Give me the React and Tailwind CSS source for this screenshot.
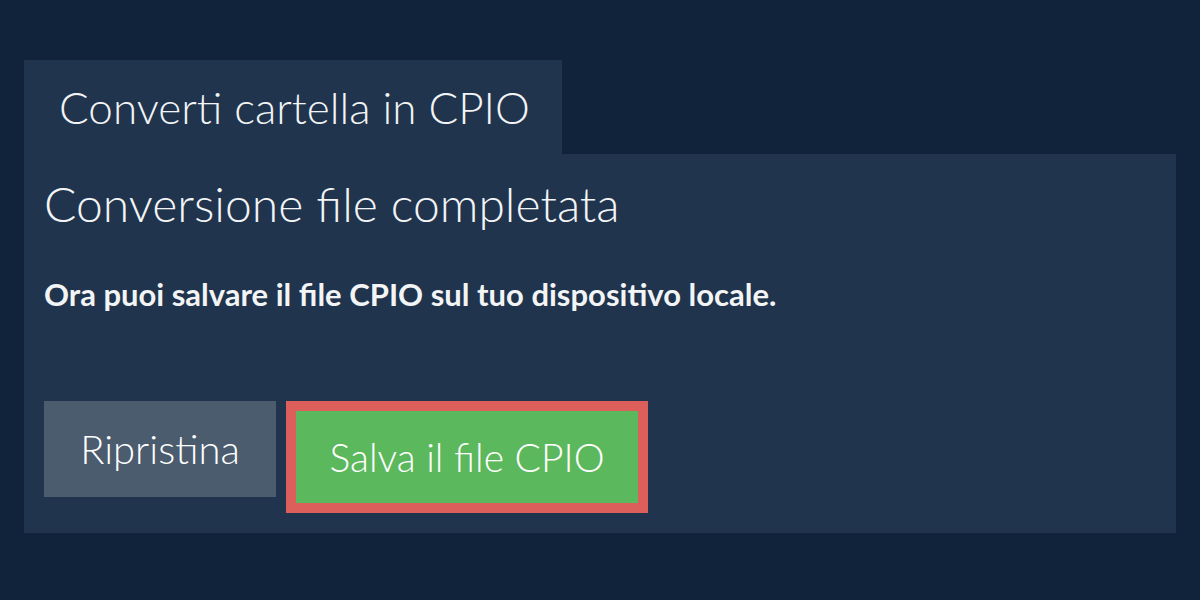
import React from 'react';

const App = () => {
  return (
    <div className="w-[1200px] h-[600px] bg-[#10233a] pt-[60px] px-[24px] font-['Lato',sans-serif] text-[#f3f4f6]">
      {/* Tab */}
      <div className="w-[538px] h-[94px] bg-[#20354d] flex items-center pl-[35px]">
        <h1 className="text-[44px] font-light leading-none">Converti cartella in CPIO</h1>
      </div>

      {/* Panel */}
      <div className="h-[379px] bg-[#20354d] px-[20px] pt-[26px]">
        <h2 className="text-[48px] font-light leading-none">Conversione file completata</h2>
        <p className="mt-[51px] text-[31px] font-bold leading-none">
          Ora puoi salvare il file CPIO sul tuo dispositivo locale.
        </p>

        <div className="mt-[91px] flex items-start gap-[10px]">
          <button className="w-[232px] h-[96px] bg-[#4b5c6e] text-white text-[40px] font-light">
            Ripristina
          </button>
          <button className="w-[362px] h-[112px] bg-[#5cb85c] border-[10px] border-[#dc5f5c] text-white text-[39px] font-light">
            Salva il file CPIO
          </button>
        </div>
      </div>
    </div>
  );
};

export default App;
